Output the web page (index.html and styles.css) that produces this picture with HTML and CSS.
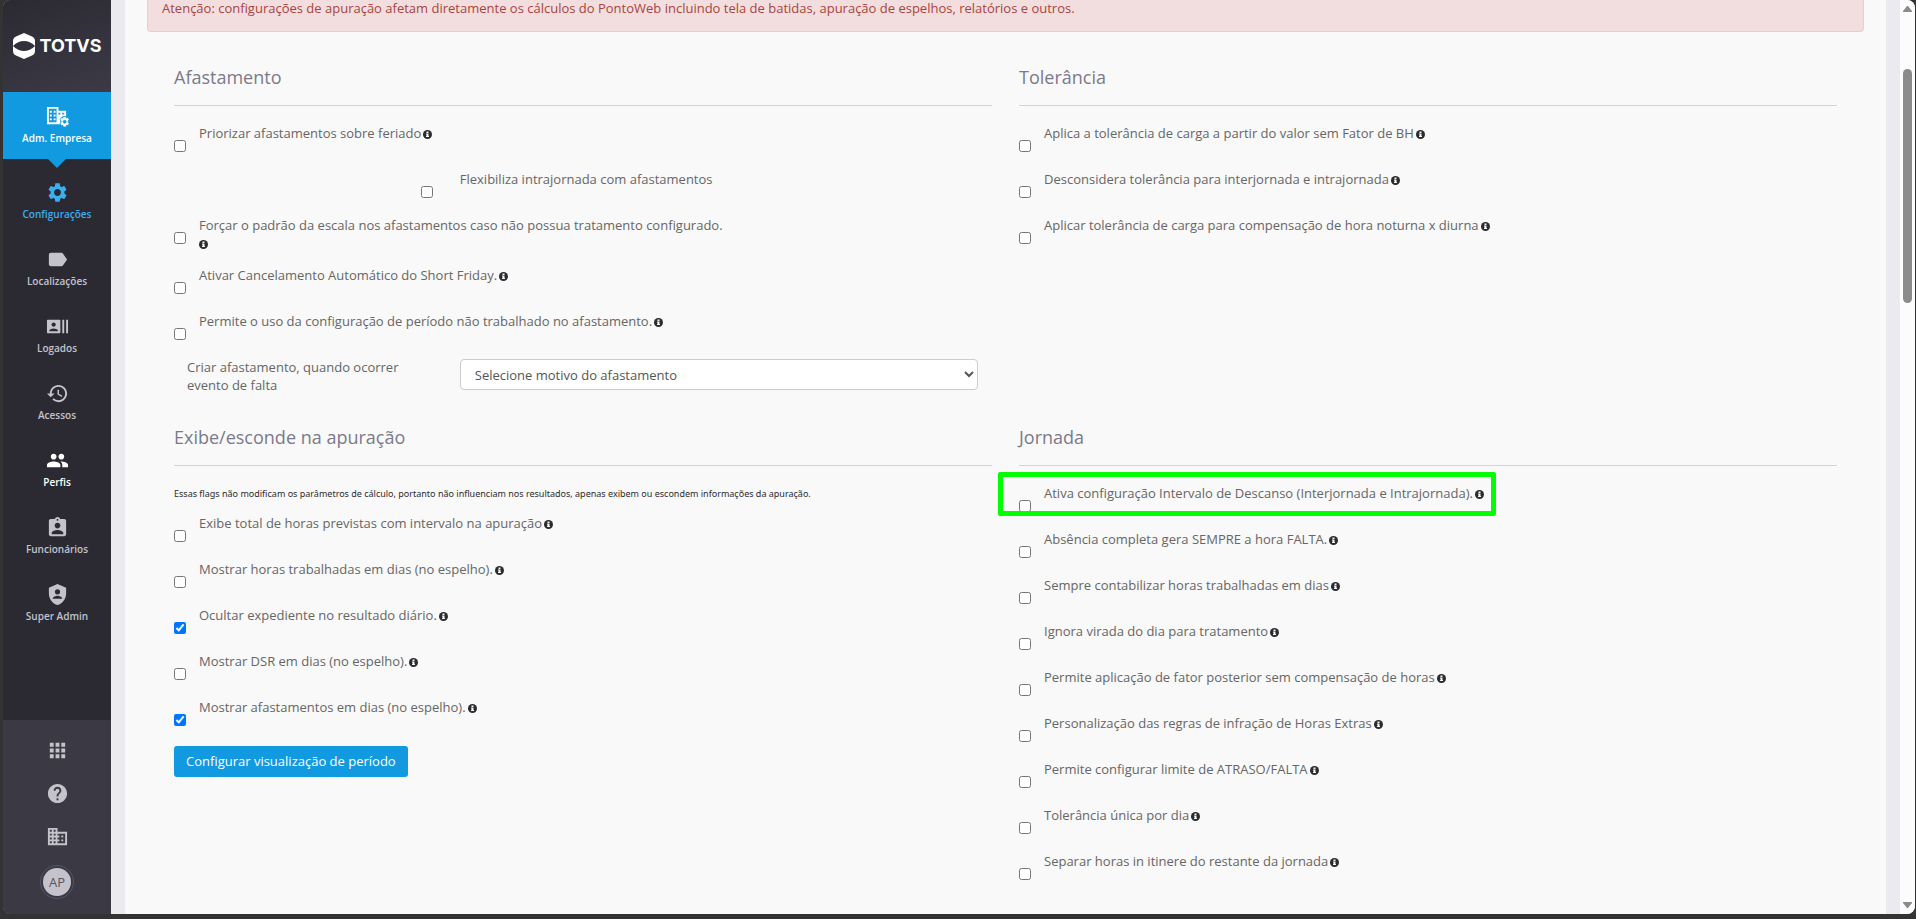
FILE: index.html
```html
<!DOCTYPE html>
<html lang="pt-BR">
<head>
  <meta charset="UTF-8" />
  <meta name="viewport" content="width=device-width, initial-scale=1.0" />
  <title>Configurações de apuração</title>
  <link rel="stylesheet" href="styles.css">
</head>
<body>
  <svg class="sprite" aria-hidden="true">
    <symbol id="info" viewBox="0 0 18 18">
      <circle cx="9" cy="9" r="9" fill="#2b2b30"/>
      <path fill="#f9f9f9" d="M7 3h4v3H7zM6 7h5v5h1v2H6v-2h1V9H6z"/>
    </symbol>
  </svg>
  <div class="window">
    <aside class="sidebar">
      <a href="#" class="brand">
        <svg class="brand-mark" viewBox="0 0 22 26">
          <path fill="#fff" d="M11 0 19 3.500Q22 5 22 8v5Q17 8 11 8T0 13V8Q0 5 3 3.500zM11 26 3 22.500Q0 21 0 18v-5q5 5 11 5t11-5v5q0 3-3 4.500z"/>
        </svg>
        <span>TOTVS</span>
      </a>
      <a href="#" class="module">
        <svg class="icon" viewBox="0 0 24 22">
          <path fill="#fff" fill-rule="evenodd" d="M1 1h12v4h8v6h-4l-2 3v5H1zM3 3v14h8V3zM4 5h2v2H4zm4 0h2v2H8zM4 9h2v2H4zm4 0h2v2H8zm-4 4h2v2H4zm4 0h2v2H8zm5-6v2h2V7zm4 0v2h2V7z"/>
          <path fill="#fff" stroke="#119adf" stroke-width=".8" fill-rule="evenodd" d="M18 11h3l.4 1.600 1.600-.5 1.300 2.400-1.200 1.200v1.400l1.200 1.100-1.300 2.400-1.600-.5L21 22h-3l-.4-1.800-1.700.4-1.300-2.400 1.200-1.100v-1.400l-1.200-1.200 1.300-2.400 1.700.5zM19.500 15a1.500 1.500 0 1 0 0 3 1.500 1.500 0 0 0 0-3z"/>
        </svg>
        <span>Adm. Empresa</span>
      </a>
      <nav class="menu">
        <a href="#" class="menu-item current">
          <svg class="icon" viewBox="0 0 24 24"><path d="M19.140 12.940c.04-.3.060-.61.060-.94 0-.32-.02-.64-.07-.94l2.030-1.580c.18-.14.230-.41.120-.61l-1.920-3.320c-.12-.22-.37-.29-.59-.22l-2.390.96c-.5-.38-1.030-.7-1.620-.94l-.36-2.540c-.04-.24-.24-.41-.48-.41h-3.840c-.24 0-.43.170-.47.410l-.36 2.540c-.59.240-1.130.570-1.620.940l-2.390-.96c-.22-.08-.47 0-.59.220L2.740 8.870c-.12.210-.08.470.120.610l2.030 1.580c-.05.300-.09.630-.09.940s.02.640.070.940l-2.030 1.580c-.18.140-.23.410-.12.610l1.920 3.320c.12.220.370.290.590.220l2.390-.96c.5.380 1.030.700 1.620.940l.36 2.540c.05.240.240.410.480.410h3.840c.24 0 .44-.17.470-.41l.36-2.540c.59-.24 1.130-.56 1.620-.94l2.390.96c.22.080.470 0 .59-.22l1.920-3.320c.12-.22.070-.47-.12-.61l-2.010-1.580zM12 15.600c-1.980 0-3.600-1.620-3.600-3.600s1.620-3.600 3.600-3.600 3.600 1.620 3.600 3.600-1.620 3.600-3.600 3.600z"/></svg>
          <span>Configurações</span>
        </a>
        <a href="#" class="menu-item">
          <svg class="icon" viewBox="0 0 24 24"><path d="M17.630 5.840C17.270 5.330 16.670 5 16 5L5 5.010C3.900 5.010 3 5.900 3 7v10c0 1.100.9 1.990 2 1.990L16 19c.67 0 1.270-.33 1.630-.84L22 12l-4.370-6.160z"/></svg>
          <span>Localizações</span>
        </a>
        <a href="#" class="menu-item">
          <svg class="icon" viewBox="0 0 24 24"><path d="M21 5v14h2V5h-2zm-4 14h2V5h-2v14zM14 5H2c-.55 0-1 .45-1 1v12c0 .55.450 1 1 1h12c.55 0 1-.45 1-1V6c0-.55-.45-1-1-1zM8 7.750c1.240 0 2.250 1.010 2.250 2.250S9.240 12.250 8 12.250 5.750 11.240 5.750 10 6.760 7.750 8 7.750zM12.500 17h-9v-.75c0-1.500 3-2.250 4.500-2.250s4.500.75 4.500 2.250V17z"/></svg>
          <span>Logados</span>
        </a>
        <a href="#" class="menu-item">
          <svg class="icon" viewBox="0 0 24 24"><path d="M13 3c-4.970 0-9 4.030-9 9H1l3.890 3.890.07.140L9 12H6c0-3.870 3.130-7 7-7s7 3.130 7 7-3.130 7-7 7c-1.930 0-3.680-.79-4.940-2.060l-1.420 1.420C8.270 19.990 10.510 21 13 21c4.970 0 9-4.030 9-9s-4.030-9-9-9zm-1 5v5l4.280 2.540.72-1.210-3.500-2.080V8H12z"/></svg>
          <span>Acessos</span>
        </a>
        <a href="#" class="menu-item strong">
          <svg class="icon" viewBox="0 0 24 24"><path d="M16 11c1.660 0 2.990-1.340 2.990-3S17.660 5 16 5c-1.660 0-3 1.340-3 3s1.340 3 3 3zm-8 0c1.660 0 2.990-1.340 2.990-3S9.660 5 8 5C6.340 5 5 6.340 5 8s1.340 3 3 3zm0 2c-2.330 0-7 1.170-7 3.500V19h14v-2.500c0-2.330-4.670-3.500-7-3.500zm8 0c-.29 0-.62.020-.97.050 1.160.84 1.970 1.970 1.970 3.450V19h6v-2.500c0-2.330-4.670-3.500-7-3.500z"/></svg>
          <span>Perfis</span>
        </a>
        <a href="#" class="menu-item">
          <svg class="icon" viewBox="0 0 24 24"><path d="M19 3h-4.180C14.400 1.840 13.300 1 12 1s-2.400.84-2.820 2H5c-1.100 0-2 .9-2 2v14c0 1.100.9 2 2 2h14c1.100 0 2-.9 2-2V5c0-1.100-.9-2-2-2zm-7 0c.55 0 1 .45 1 1s-.45 1-1 1-1-.45-1-1 .45-1 1-1zm0 4c1.660 0 3 1.340 3 3s-1.340 3-3 3-3-1.340-3-3 1.340-3 3-3zm6 12H6v-1.400c0-2 4-3.100 6-3.100s6 1.100 6 3.100V19z"/></svg>
          <span>Funcionários</span>
        </a>
        <a href="#" class="menu-item">
          <svg class="icon" viewBox="0 0 24 24"><path fill-rule="evenodd" d="M12 1 3 5v6c0 5.550 3.840 10.740 9 12 5.160-1.260 9-6.450 9-12V5zM12 6.500a2.700 2.700 0 1 1 0 5.400 2.700 2.700 0 0 1 0-5.400zM7 16.500c0-2.200 3.300-3.200 5-3.200s5 1 5 3.200z"/></svg>
          <span>Super Admin</span>
        </a>
      </nav>
      <div class="tools">
        <a href="#" aria-label="Aplicativos"><svg class="icon" viewBox="0 0 24 24"><path d="M4 8h4V4H4v4zm6 12h4v-4h-4v4zm-6 0h4v-4H4v4zm0-6h4v-4H4v4zm6 0h4v-4h-4v4zm6-10v4h4V4h-4zm-6 4h4V4h-4v4zm6 6h4v-4h-4v4zm0 6h4v-4h-4v4z"/></svg></a>
        <a href="#" aria-label="Ajuda"><svg class="icon" viewBox="0 0 24 24"><path d="M12 2C6.480 2 2 6.480 2 12s4.480 10 10 10 10-4.480 10-10S17.520 2 12 2zm1 17h-2v-2h2v2zm2.070-7.750-.9.920C13.450 12.900 13 13.500 13 15h-2v-.5c0-1.100.45-2.100 1.170-2.830l1.240-1.260c.37-.36.590-.86.590-1.410 0-1.100-.9-2-2-2s-2 .9-2 2H8c0-2.210 1.790-4 4-4s4 1.790 4 4c0 .88-.36 1.680-.93 2.250z"/></svg></a>
        <a href="#" aria-label="Empresa"><svg class="icon" viewBox="0 0 24 24"><path d="M12 7V3H2v18h20V7H12zM6 19H4v-2h2v2zm0-4H4v-2h2v2zm0-4H4V9h2v2zm0-4H4V5h2v2zm4 12H8v-2h2v2zm0-4H8v-2h2v2zm0-4H8V9h2v2zm0-4H8V5h2v2zm10 12h-8v-2h2v-2h-2v-2h2v-2h-2V9h8v10zm-2-8h-2v2h2v-2zm0 4h-2v2h2v-2z"/></svg></a>
        <a href="#" class="avatar">AP</a>
      </div>
    </aside>

    <main class="page">
      <div class="panel">
        <div class="alert">Atenção: configurações de apuração afetam diretamente os cálculos do PontoWeb incluindo tela de batidas, apuração de espelhos, relatórios e outros.</div>
        <form class="sections">
          <section>
            <h2>Afastamento</h2>
            <div class="option">
              <input type="checkbox" id="priorizar">
              <label for="priorizar">Priorizar afastamentos sobre feriado<svg class="info"><use href="#info"/></svg></label>
            </div>
            <div class="option split">
              <input type="checkbox" id="flexibiliza">
              <label for="flexibiliza">Flexibiliza intrajornada com afastamentos</label>
            </div>
            <div class="option tall">
              <input type="checkbox" id="forcar">
              <label for="forcar">Forçar o padrão da escala nos afastamentos caso não possua tratamento configurado. <svg class="info"><use href="#info"/></svg></label>
            </div>
            <div class="option">
              <input type="checkbox" id="shortFriday">
              <label for="shortFriday">Ativar Cancelamento Automático do Short Friday.<svg class="info"><use href="#info"/></svg></label>
            </div>
            <div class="option">
              <input type="checkbox" id="naoTrabalhado">
              <label for="naoTrabalhado">Permite o uso da configuração de período não trabalhado no afastamento.<svg class="info"><use href="#info"/></svg></label>
            </div>
            <div class="split field">
              <label for="motivo">Criar afastamento, quando ocorrer evento de falta</label>
              <select id="motivo">
                <option>Selecione motivo do afastamento</option>
              </select>
            </div>
          </section>

          <section>
            <h2>Tolerância</h2>
            <div class="option">
              <input type="checkbox" id="fatorBh">
              <label for="fatorBh">Aplica a tolerância de carga a partir do valor sem Fator de BH<svg class="info"><use href="#info"/></svg></label>
            </div>
            <div class="option">
              <input type="checkbox" id="desconsidera">
              <label for="desconsidera">Desconsidera tolerância para interjornada e intrajornada<svg class="info"><use href="#info"/></svg></label>
            </div>
            <div class="option">
              <input type="checkbox" id="noturna">
              <label for="noturna">Aplicar tolerância de carga para compensação de hora noturna x diurna<svg class="info"><use href="#info"/></svg></label>
            </div>
          </section>

          <section>
            <h2>Exibe/esconde na apuração</h2>
            <p class="note">Essas flags não modificam os parâmetros de cálculo, portanto não influenciam nos resultados, apenas exibem ou escondem informações da apuração.</p>
            <div class="option">
              <input type="checkbox" id="horasPrevistas">
              <label for="horasPrevistas">Exibe total de horas previstas com intervalo na apuração<svg class="info"><use href="#info"/></svg></label>
            </div>
            <div class="option">
              <input type="checkbox" id="horasDias">
              <label for="horasDias">Mostrar horas trabalhadas em dias (no espelho).<svg class="info"><use href="#info"/></svg></label>
            </div>
            <div class="option">
              <input type="checkbox" id="expediente" checked>
              <label for="expediente">Ocultar expediente no resultado diário.<svg class="info"><use href="#info"/></svg></label>
            </div>
            <div class="option">
              <input type="checkbox" id="dsr">
              <label for="dsr">Mostrar DSR em dias (no espelho).<svg class="info"><use href="#info"/></svg></label>
            </div>
            <div class="option">
              <input type="checkbox" id="afastamentosDias" checked>
              <label for="afastamentosDias">Mostrar afastamentos em dias (no espelho).<svg class="info"><use href="#info"/></svg></label>
            </div>
            <button type="button" class="btn-primary">Configurar visualização de período</button>
          </section>

          <section>
            <h2>Jornada</h2>
            <div class="option highlight">
              <input type="checkbox" id="descanso">
              <label for="descanso">Ativa configuração Intervalo de Descanso (Interjornada e Intrajornada).<svg class="info"><use href="#info"/></svg></label>
            </div>
            <div class="option">
              <input type="checkbox" id="absencia">
              <label for="absencia">Absência completa gera SEMPRE a hora FALTA.<svg class="info"><use href="#info"/></svg></label>
            </div>
            <div class="option">
              <input type="checkbox" id="contabilizar">
              <label for="contabilizar">Sempre contabilizar horas trabalhadas em dias<svg class="info"><use href="#info"/></svg></label>
            </div>
            <div class="option">
              <input type="checkbox" id="virada">
              <label for="virada">Ignora virada do dia para tratamento<svg class="info"><use href="#info"/></svg></label>
            </div>
            <div class="option">
              <input type="checkbox" id="fatorPosterior">
              <label for="fatorPosterior">Permite aplicação de fator posterior sem compensação de horas<svg class="info"><use href="#info"/></svg></label>
            </div>
            <div class="option">
              <input type="checkbox" id="infracao">
              <label for="infracao">Personalização das regras de infração de Horas Extras<svg class="info"><use href="#info"/></svg></label>
            </div>
            <div class="option">
              <input type="checkbox" id="limite">
              <label for="limite">Permite configurar limite de ATRASO/FALTA<svg class="info"><use href="#info"/></svg></label>
            </div>
            <div class="option">
              <input type="checkbox" id="toleranciaUnica">
              <label for="toleranciaUnica">Tolerância única por dia<svg class="info"><use href="#info"/></svg></label>
            </div>
            <div class="option">
              <input type="checkbox" id="initinere">
              <label for="initinere">Separar horas in itinere do restante da jornada<svg class="info"><use href="#info"/></svg></label>
            </div>
          </section>
        </form>
      </div>
    </main>

    <div class="scrollbar" aria-hidden="true">
      <svg viewBox="0 0 9 6"><path d="M4 0h1l4 5v1H0V5z"/></svg>
      <div class="track"><div class="thumb"></div></div>
      <svg viewBox="0 0 9 6"><path d="M0 0h9v1L5 6H4L0 1z"/></svg>
    </div>
  </div>
</body>
</html>
```
FILE: styles.css
```css
* {
  box-sizing: border-box;
}
body {
  margin: 0;
  height: 100vh;
  padding: 0 1px 5px 3px;
  background: #333333;
  font-family: 'Open Sans', sans-serif;
  font-size: 13px;
  line-height: 18px;
  color: #666666;
}
a {
  color: inherit;
  text-decoration: none;
}
.sprite {
  display: none;
}
.window {
  display: flex;
  height: 100%;
  overflow: hidden;
  border-radius: 8px;
  background: #ebeaef;
}

/* sidebar */
.sidebar {
  display: flex;
  flex-direction: column;
  flex: none;
  width: 108px;
  background: #2b2a33;
  color: #c4c3cc;
  font-size: 10px;
  font-weight: 600;
  line-height: 12px;
  text-align: center;
}
.icon {
  display: block;
  width: 23px;
  height: 23px;
  fill: currentColor;
}
.brand {
  display: flex;
  align-items: center;
  justify-content: center;
  gap: 5px;
  height: 92px;
  background: linear-gradient(160deg, #2b2a33, #3c3a45);
  color: #ffffff;
  font-family: Inter, sans-serif;
  font-size: 18px;
  font-weight: 700;
}
.brand-mark {
  width: 22px;
  height: 26px;
}
.module {
  position: relative;
  display: flex;
  flex-direction: column;
  align-items: center;
  gap: 4px;
  height: 67px;
  padding-top: 13px;
  background: #119adf;
  color: #ffffff;
}
.module::after {
  content: '';
  position: absolute;
  top: 100%;
  border: 9px solid transparent;
  border-top-color: #119adf;
  border-bottom: 0;
}
.menu {
  flex: 1;
  padding-top: 22px;
}
.menu-item {
  display: flex;
  flex-direction: column;
  align-items: center;
  gap: 4px;
  height: 67px;
}
.menu-item.current {
  color: #3aaef0;
}
.menu-item.strong {
  color: #ffffff;
}
.tools {
  display: flex;
  flex-direction: column;
  align-items: center;
  gap: 20px;
  height: 194px;
  padding-top: 19px;
  background: #3b3a44;
}
.avatar {
  width: 28px;
  height: 28px;
  border-radius: 50%;
  outline: 1px solid #55536a;
  outline-offset: 2px;
  background: #c4c3cc;
  color: #55535f;
  font-size: 13px;
  font-weight: 400;
  line-height: 28px;
}

/* content */
.page {
  flex: 1;
  padding: 0 14px;
}
.panel {
  height: 100%;
  padding: 0 22px;
  background: #f9f9f9;
}
.alert {
  padding: 0 14px 15px;
  border: 1px solid #ebccd1;
  border-top: 0;
  border-radius: 0 0 4px 4px;
  background: #f2dede;
  color: #a94442;
  line-height: 16px;
}
.sections {
  display: grid;
  grid-template-columns: 1fr 1fr;
  gap: 30px 27px;
  padding: 32px 27px 0;
}
h2 {
  margin: 0 0 18px;
  padding-bottom: 15px;
  border-bottom: 1px solid #d4d4d8;
  color: #7b7a8c;
  font-size: 18px;
  font-weight: 400;
  line-height: 26px;
}
.option {
  display: flex;
  align-items: flex-start;
  gap: 13px;
  height: 46px;
}
.option.tall {
  height: 50px;
}
.option input {
  flex: none;
  width: 12px;
  height: 12px;
  margin: 16px 0 0;
}
.option label {
  position: relative;
  max-width: 65%;
}
.info {
  display: inline-block;
  width: 9px;
  height: 9px;
  margin-left: 2px;
  vertical-align: -1px;
}
.tall .info {
  margin-left: 0;
}
.split {
  display: grid;
  grid-template-columns: 20fr 38fr;
  gap: 0;
  padding: 0 14px 0 13px;
}
.split input {
  justify-self: end;
  margin-right: 27px;
}
.split label {
  max-width: none;
}
.field label {
  padding-right: 40px;
}
.field select {
  width: 100%;
  height: 31px;
  margin-top: 1px;
  padding: 0 10px;
  border: 1px solid #cccccc;
  border-radius: 4px;
  background: #ffffff;
  color: #555555;
  font-family: inherit;
  font-size: 13px;
}
.note {
  margin: 0 0 10px;
  color: #2b2b30;
  font-family: 'Noto Sans', sans-serif;
  font-size: 9px;
  line-height: 20px;
}
.btn-primary {
  display: block;
  margin-top: 2px;
  height: 31px;
  padding: 0 12px 2px;
  border: 0;
  border-radius: 3px;
  background: #119adf;
  color: #ffffff;
  font-family: inherit;
  font-size: 13px;
}
.highlight label::after {
  content: '';
  position: absolute;
  top: -12px;
  right: -12px;
  bottom: -14px;
  left: -46px;
  border: 5px solid #00ff00;
  border-radius: 2px;
  pointer-events: none;
}

/* scrollbar */
.scrollbar {
  display: flex;
  flex-direction: column;
  align-items: center;
  flex: none;
  width: 15px;
  padding: 6px 0;
  background: #fcfcfc;
}
.scrollbar svg {
  width: 9px;
  height: 6px;
  fill: #8b8b8b;
}
.track {
  flex: 1;
  padding-top: 57px;
}
.thumb {
  width: 9px;
  height: 234px;
  border-radius: 5px;
  background: #8b8b8b;
}
```
